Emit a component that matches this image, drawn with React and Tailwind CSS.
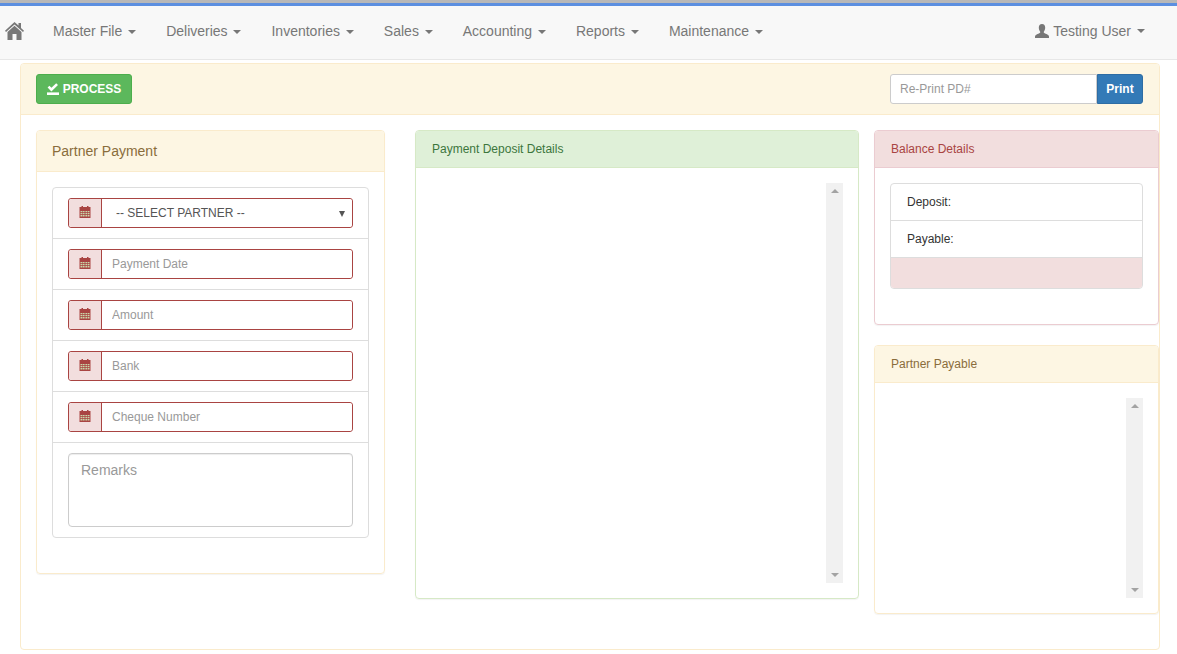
const navItems = ['Master File', 'Deliveries', 'Inventories', 'Sales', 'Accounting', 'Reports', 'Maintenance']
const fields = ['Payment Date', 'Amount', 'Bank', 'Cheque Number']

function Caret() {
  return <span className="ml-[2px] inline-block h-0 w-0 border-x-4 border-t-4 border-x-transparent border-t-[#777] align-middle" />
}

function HomeIcon() {
  return (
    <svg width="19" height="18" viewBox="0 0 19 18" className="fill-[#777]">
      <path d="M9.5 0 L13.5 3.6 V1 H16 V5.9 L19 8.7 L18 9.9 L9.5 2.4 L1 9.9 L0 8.7 Z" />
      <path d="M9.5 3.8 L16.5 10 V18 H11.5 V12 H7.5 V18 H2.5 V10 Z" />
    </svg>
  )
}

function UserIcon() {
  return (
    <svg width="14" height="14" viewBox="0 0 14 14" className="fill-[#777]">
      <path d="M7 0 C9.2 0 10.2 1.6 10.2 3.6 C10.2 5.6 9.4 7 8.8 7.8 C8.6 8.6 9 9 10 9.4 C12 10.1 14 10.8 14 12.4 V14 H0 V12.4 C0 10.8 2 10.1 4 9.4 C5 9 5.4 8.6 5.2 7.8 C4.6 7 3.8 5.6 3.8 3.6 C3.8 1.6 4.8 0 7 0 Z" />
    </svg>
  )
}

function SavedIcon() {
  return (
    <svg width="12" height="12" viewBox="0 0 12 12" className="fill-white">
      <path d="M0.6 4.6 L2.4 2.8 L4.4 4.8 L9.2 0.2 L11 2 L4.4 8.4 Z" />
      <rect x="0" y="9.4" width="12" height="2.6" />
    </svg>
  )
}

function CalendarIcon() {
  return (
    <svg width="12" height="12" viewBox="0 0 12 12">
      <rect x="2.5" y="0" width="1.5" height="2" fill="#a94442" />
      <rect x="8" y="0" width="1.5" height="2" fill="#a94442" />
      <rect x="0.5" y="1" width="11" height="11" fill="#a94442" />
      <path d="M1.5 5h2v1.2h-2zM4 5h1.6v1.2H4zM6.4 5H8v1.2H6.4zM8.6 5h1.9v1.2H8.6zM1.5 7h2v1.2h-2zM4 7h1.6v1.2H4zM6.4 7H8v1.2H6.4zM8.6 7h1.9v1.2H8.6zM1.5 9h2v1.4h-2zM4 9h1.6v1.4H4zM6.4 9H8v1.4H6.4zM8.6 9h1.9v1.4H8.6z" fill="#c9d6a8" />
    </svg>
  )
}

function ScrollTrack({ className }) {
  return (
    <div className={`flex w-[17px] flex-col items-center justify-between bg-[#f1f1f1] py-[6px] ${className}`}>
      <span className="h-0 w-0 border-x-4 border-b-4 border-x-transparent border-b-[#a3a3a3]" />
      <span className="h-0 w-0 border-x-4 border-t-4 border-x-transparent border-t-[#a3a3a3]" />
    </div>
  )
}

function Addon() {
  return (
    <span className="flex w-[33px] shrink-0 items-center justify-center rounded-l-[3px] border-r border-[#a94442] bg-[#f2dede] pb-[2px]">
      <CalendarIcon />
    </span>
  )
}

export default function App() {
  return (
    <div className="h-[654px] w-[1177px] overflow-hidden bg-white font-['Liberation_Sans',Arial,sans-serif] text-xs text-[#333]">
      {/* Top accent and navbar */}
      <div className="h-[3px] bg-[#b8b8b8]" />
      <div className="h-[3px] bg-[#5c8fe0]" />
      <nav className="flex h-[54px] items-center border-b border-[#e7e7e7] bg-[#f8f8f8] pb-[4px] text-sm text-[#777]">
        <span className="ml-[5px] mr-[14px] flex"><HomeIcon /></span>
        {navItems.map((item) => (
          <a key={item} className="px-[15px]">{item} <Caret /></a>
        ))}
        <a className="ml-auto mr-[32px] flex items-center">
          <UserIcon />
          <span className="ml-[4px]">Testing User</span>
          <span className="ml-[4px] flex"><Caret /></span>
        </a>
      </nav>

      {/* Outer panel */}
      <div className="ml-[20px] mt-[3px] h-[587px] w-[1140px] rounded border border-[#faebcc] bg-white">
        <div className="flex h-[51px] items-center justify-between rounded-t-[3px] border-b border-[#faebcc] bg-[#fdf6e3] pl-[15px] pr-[16px]">
          <button className="flex h-[30px] w-[96px] items-center justify-center gap-[4px] rounded-[3px] border border-[#4cae4c] bg-[#5cb85c] font-bold text-white">
            <SavedIcon /> PROCESS
          </button>
          <div className="flex h-[30px]">
            <input
              placeholder="Re-Print PD#"
              className="h-[30px] w-[207px] rounded-l-[3px] border border-[#ccc] bg-white px-[9px] text-xs outline-none placeholder:text-[#999]"
            />
            <button className="h-[30px] w-[46px] rounded-r-[3px] border border-[#2e6da4] bg-[#337ab7] font-bold text-white">Print</button>
          </div>
        </div>

        <div className="flex items-start pl-[15px] pt-[15px]">
          {/* Partner Payment */}
          <section className="h-[444px] w-[349px] rounded border border-[#faebcc] shadow-[0_1px_1px_rgba(0,0,0,0.05)]">
            <h2 className="flex h-[41px] items-center rounded-t-[3px] border-b border-[#faebcc] bg-[#fdf6e3] px-[15px] text-sm font-normal text-[#8a6d3b]">Partner Payment</h2>
            <div className="px-[15px] pt-[15px]">
              <div className="rounded border border-[#ddd]">
                <div className="border-b border-[#ddd] px-[15px] pb-[10px] pt-[10px]">
                  <div className="flex h-[30px] rounded-[3px] border border-[#a94442]">
                    <Addon />
                    <div className="relative min-w-0 flex-1">
                      <select className="h-full w-full appearance-none rounded-r-[3px] bg-white pl-[14px] text-xs text-[#555] outline-none">
                        <option>-- SELECT PARTNER --</option>
                      </select>
                      <span className="absolute right-[7px] top-[12px] h-0 w-0 border-x-[3.5px] border-t-[6px] border-x-transparent border-t-[#555]" />
                    </div>
                  </div>
                </div>
                {fields.map((field) => (
                  <div key={field} className="border-b border-[#ddd] px-[15px] py-[10px]">
                    <div className="flex h-[30px] rounded-[3px] border border-[#a94442]">
                      <Addon />
                      <input placeholder={field} className="min-w-0 flex-1 rounded-r-[3px] bg-white px-[10px] text-xs outline-none placeholder:text-[#999]" />
                    </div>
                  </div>
                ))}
                <div className="px-[15px] py-[10px]">
                  <textarea
                    placeholder="Remarks"
                    className="block h-[74px] w-full resize-none rounded border border-[#ccc] px-[12px] py-[6px] text-sm shadow-[inset_0_1px_1px_rgba(0,0,0,0.075)] outline-none placeholder:text-[#999]"
                  />
                </div>
              </div>
            </div>
          </section>

          {/* Payment Deposit Details */}
          <section className="ml-[30px] h-[469px] w-[444px] rounded border border-[#d6e9c6] shadow-[0_1px_1px_rgba(0,0,0,0.05)]">
            <h2 className="flex h-[37px] items-center rounded-t-[3px] border-b border-[#d6e9c6] bg-[#dff0d8] px-[16px] text-xs font-normal text-[#3c763d]">Payment Deposit Details</h2>
            <div className="flex justify-end px-[15px] pt-[15px]">
              <ScrollTrack className="h-[400px]" />
            </div>
          </section>

          <div className="ml-[15px] w-[285px]">
            {/* Balance Details */}
            <section className="h-[195px] rounded border border-[#ebccd1] shadow-[0_1px_1px_rgba(0,0,0,0.05)]">
              <h2 className="flex h-[37px] items-center rounded-t-[3px] border-b border-[#ebccd1] bg-[#f2dede] px-[16px] text-xs font-normal text-[#a94442]">Balance Details</h2>
              <div className="px-[15px] pt-[15px]">
                <div className="rounded border border-[#ddd]">
                  <div className="flex h-[37px] items-center border-b border-[#ddd] px-[16px]">Deposit:</div>
                  <div className="flex h-[37px] items-center border-b border-[#ddd] px-[16px]">Payable:</div>
                  <div className="h-[30px] rounded-b-[3px] bg-[#f2dede]" />
                </div>
              </div>
            </section>

            {/* Partner Payable */}
            <section className="mt-[20px] h-[269px] rounded border border-[#faebcc] shadow-[0_1px_1px_rgba(0,0,0,0.05)]">
              <h2 className="flex h-[37px] items-center rounded-t-[3px] border-b border-[#faebcc] bg-[#fdf6e3] px-[16px] text-xs font-normal text-[#8a6d3b]">Partner Payable</h2>
              <div className="flex justify-end px-[15px] pt-[15px]">
                <ScrollTrack className="h-[200px]" />
              </div>
            </section>
          </div>
        </div>
      </div>
    </div>
  )
}
